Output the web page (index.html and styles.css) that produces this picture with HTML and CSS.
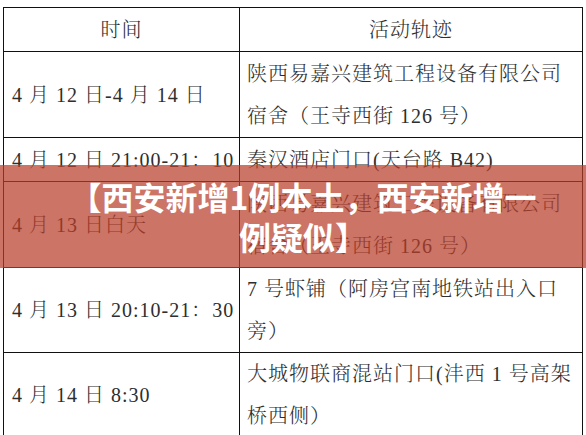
FILE: index.html
```html
<!DOCTYPE html>
<html lang="zh">
<head>
<meta charset="utf-8">
<title>西安新增1例本土</title>
<link rel="stylesheet" href="styles.css">
</head>
<body>
<div class="page">
  <table class="track">
    <colgroup><col class="c-time"><col class="c-place"></colgroup>
    <tr class="h44 head">
      <td>时间</td>
      <td>活动轨迹</td>
    </tr>
    <tr class="h86">
      <td>4 月 12 日-4 月 14 日</td>
      <td>陕西易嘉兴建筑工程设备有限公司<br>宿舍（王寺西街 126 号）</td>
    </tr>
    <tr class="h44">
      <td>4 月 12 日 21:00-21：10</td>
      <td>秦汉酒店门口(天台路 B42)</td>
    </tr>
    <tr class="h86">
      <td>4 月 13 日白天</td>
      <td>陕西易嘉兴建筑工程设备有限公司<br>宿舍（王寺西街 126 号）</td>
    </tr>
    <tr class="h83">
      <td>4 月 13 日 20:10-21：30</td>
      <td>7 号虾铺（阿房宫南地铁站出入口<br>旁）</td>
    </tr>
    <tr class="h84">
      <td>4 月 14 日 8:30</td>
      <td>大城物联商混站门口(沣西 1 号高架<br>桥西侧）</td>
    </tr>
  </table>
  <div class="banner">
    <p class="banner-title">【西安新增1例本土，西安新增一<br>例疑似】</p>
  </div>
</div>
</body>
</html>
```
FILE: styles.css
```css
html, body {
  margin: 0;
  padding: 0;
  background: #ffffff;
}
.page {
  position: relative;
  width: 586px;
  height: 435px;
  overflow: hidden;
  padding: 7px 0 0 3px;
  box-sizing: border-box;
}
.track {
  border-collapse: collapse;
  table-layout: fixed;
  width: 579px;
  font-family: "Liberation Serif", "Noto Serif CJK SC", "Noto Sans CJK SC", serif;
  font-weight: 300;
  font-size: 20px;
  letter-spacing: 1px;
  color: #2e2e2e;
}
.c-time { width: 236px; }
.c-place { width: 343px; }
.track td {
  border: 1px solid #111;
  padding: 0 0 0 8px;
  line-height: 42px;
  vertical-align: middle;
  white-space: nowrap;
}
.track td + td { padding-left: 7px; }
.head td { text-align: center; padding-left: 0; }
.track .head td + td { padding-left: 0; }
.h44 { height: 44px; }
.h86 { height: 86px; }
.h83 { height: 83px; }
.h84 { height: 84px; }
.banner {
  position: absolute;
  left: 0;
  top: 165px;
  width: 586px;
  height: 103px;
  box-sizing: border-box;
  padding: 0 0 2px 20px;
  background: rgba(185, 62, 42, 0.72);
  display: flex;
  align-items: center;
  justify-content: center;
}
.banner-title {
  margin: 0;
  text-align: center;
  color: #ffffff;
  font-family: "Noto Sans CJK SC", "Noto Sans", sans-serif;
  font-weight: 700;
  font-size: 32px;
  line-height: 40px;
}
```
